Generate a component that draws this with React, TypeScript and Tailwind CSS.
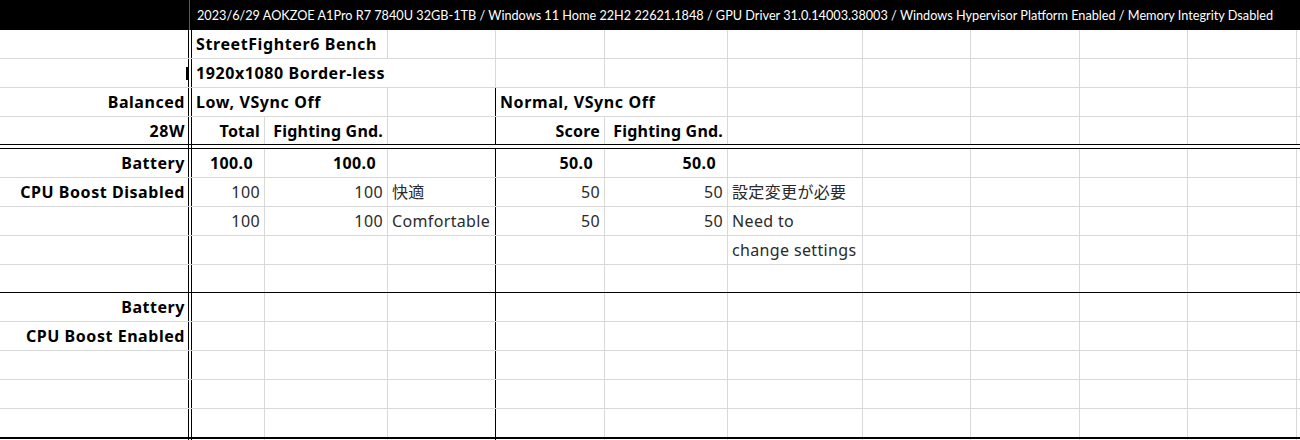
import type { ReactNode } from "react";

type Kind = "label" | "left" | "head" | "big" | "num" | "note";

interface CellSpec {
  c: number;
  span?: number;
  text?: ReactNode;
  k?: Kind;
}

interface RowSpec {
  cls: string;
  cells: CellSpec[];
}

const COL_W = [
  "w-[192px]",
  "w-[73px]",
  "w-[123px]",
  "w-[108px]",
  "w-[109px]",
  "w-[123px]",
  "w-[135px]",
  "w-[108px]",
  "w-[109px]",
  "w-[108px]",
  "w-[109px]",
];

const SPAN_W: Record<string, string> = {
  "1-2": "w-[196px]",
  "1-3": "w-[304px]",
  "4-2": "w-[232px]",
};

const KIND_CLS: Record<Kind, string> = {
  label: "justify-end pr-[3px] font-bold text-black tracking-[0.55px]",
  left: "justify-start pl-[4px] font-bold text-black tracking-[0.6px]",
  head: "justify-end pr-[4px] font-bold text-black tracking-[0.2px]",
  big: "justify-end pr-[11px] font-bold text-black tracking-[0.4px]",
  num: "justify-end pr-[4px] text-[#2a2a2a] tracking-[0.4px]",
  note: "justify-start pl-[4px] text-[#2a2a2a] tracking-[0.35px]",
};

const GRID = "border-[#d9d9d9]";
const ROW = "h-[29px] border-b border-[#d9d9d9]";

// empty cells from column `from` to the right edge
const rest = (from: number): CellSpec[] =>
  Array.from({ length: 11 - from }, (_, i) => ({ c: from + i }));

const rows: RowSpec[] = [
  {
    cls: ROW,
    cells: [
      { c: 0 },
      { c: 1, span: 2, text: "StreetFighter6 Bench", k: "left" },
      ...rest(3),
    ],
  },
  {
    cls: ROW,
    cells: [
      {
        c: 0,
        k: "label",
        text: <span className="block w-[2px] h-[13px] bg-black -mr-[3px]" />,
      },
      { c: 1, span: 3, text: "1920x1080 Border-less", k: "left" },
      ...rest(4),
    ],
  },
  {
    cls: ROW,
    cells: [
      { c: 0, text: "Balanced", k: "label" },
      { c: 1, span: 2, text: "Low, VSync Off", k: "left" },
      { c: 3 },
      { c: 4, span: 2, text: "Normal, VSync Off", k: "left" },
      ...rest(6),
    ],
  },
  {
    cls: "h-[27px]",
    cells: [
      { c: 0, text: "28W", k: "label" },
      { c: 1, text: "Total", k: "head" },
      { c: 2, text: "Fighting Gnd.", k: "head" },
      { c: 3 },
      { c: 4, text: "Score", k: "head" },
      { c: 5, text: "Fighting Gnd.", k: "head" },
      ...rest(6),
    ],
  },
];

const body: RowSpec[] = [
  {
    cls: ROW,
    cells: [
      { c: 0, text: "Battery", k: "label" },
      { c: 1, text: "100.0", k: "big" },
      { c: 2, text: "100.0", k: "big" },
      { c: 3 },
      { c: 4, text: "50.0", k: "big" },
      { c: 5, text: "50.0", k: "big" },
      ...rest(6),
    ],
  },
  {
    cls: ROW,
    cells: [
      { c: 0, text: "CPU Boost Disabled", k: "label" },
      { c: 1, text: "100", k: "num" },
      { c: 2, text: "100", k: "num" },
      { c: 3, text: "快適", k: "note" },
      { c: 4, text: "50", k: "num" },
      { c: 5, text: "50", k: "num" },
      { c: 6, text: "設定変更が必要", k: "note" },
      ...rest(7),
    ],
  },
  {
    cls: ROW,
    cells: [
      { c: 0 },
      { c: 1, text: "100", k: "num" },
      { c: 2, text: "100", k: "num" },
      { c: 3, text: "Comfortable", k: "note" },
      { c: 4, text: "50", k: "num" },
      { c: 5, text: "50", k: "num" },
      { c: 6, text: "Need to", k: "note" },
      ...rest(7),
    ],
  },
  {
    cls: ROW,
    cells: [...rest(0).slice(0, 6), { c: 6, text: "change settings", k: "note" }, ...rest(7)],
  },
  { cls: "h-[28px] border-b border-black", cells: rest(0) },
  {
    cls: ROW,
    cells: [{ c: 0, text: "Battery", k: "label" }, ...rest(1)],
  },
  {
    cls: ROW,
    cells: [{ c: 0, text: "CPU Boost Enabled", k: "label" }, ...rest(1)],
  },
  { cls: ROW, cells: rest(0) },
  { cls: ROW, cells: rest(0) },
  { cls: "h-[30px] border-b-2 border-black", cells: rest(0) },
  { cls: ROW, cells: rest(0) },
];

const borderFor = (end: number, thick: boolean) => {
  if (end === 0) return "border-r-4 border-double border-black";
  if (end === 3 && thick) return "border-r border-black";
  return `border-r ${GRID}`;
};

const SheetRow = ({ row, thick }: { row: RowSpec; thick: boolean }) => (
  <div className={`flex ${row.cls}`}>
    {row.cells.map((cell) => {
      const span = cell.span ?? 1;
      const w = span > 1 ? SPAN_W[`${cell.c}-${span}`] : COL_W[cell.c];
      const end = cell.c + span - 1;
      return (
        <div
          key={cell.c}
          className={`${w} shrink-0 h-full flex items-center whitespace-nowrap overflow-visible ${borderFor(
            end,
            thick
          )} ${cell.k ? KIND_CLS[cell.k] : ""}`}
        >
          {cell.text}
        </div>
      );
    })}
    <div className="flex-1 h-full" />
  </div>
);

export default function App() {
  return (
    <div className="w-[1300px] h-[440px] overflow-hidden bg-white font-['Noto_Sans','Noto_Sans_CJK_JP',sans-serif] text-[16px] leading-none">
      <div className="h-[30px] bg-black flex items-center">
        <div className="w-[190px] h-full shrink-0 border-r border-[#5a5a5a]" />
        <div className="pl-[7px] text-white text-[12.7px] whitespace-nowrap font-['Lato',sans-serif]">
          2023/6/29 AOKZOE A1Pro R7 7840U 32GB-1TB / Windows 11 Home 22H2 22621.1848 / GPU Driver
          31.0.14003.38003 / Windows Hypervisor Platform Enabled / Memory Integrity Dsabled
        </div>
      </div>

      {rows.map((row, i) => (
        <SheetRow key={i} row={row} thick={i >= 2} />
      ))}

      {/* double rule under the header rows */}
      <div className="h-[5px] border-y border-black flex">
        <div className="w-[192px] h-full border-r-4 border-double border-black" />
      </div>

      {body.map((row, i) => (
        <SheetRow key={i} row={row} thick />
      ))}
    </div>
  );
}
